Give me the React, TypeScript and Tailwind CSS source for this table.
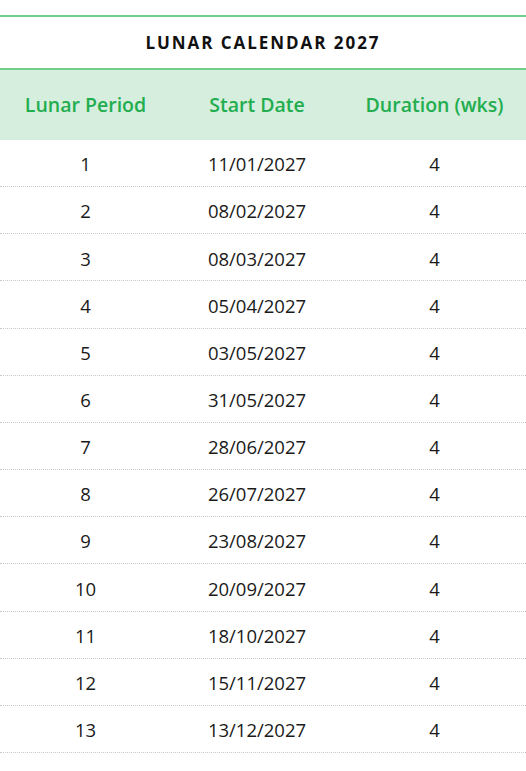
import React from "react";

const rows: [string, string, string][] = [
  ["1", "11/01/2027", "4"],
  ["2", "08/02/2027", "4"],
  ["3", "08/03/2027", "4"],
  ["4", "05/04/2027", "4"],
  ["5", "03/05/2027", "4"],
  ["6", "31/05/2027", "4"],
  ["7", "28/06/2027", "4"],
  ["8", "26/07/2027", "4"],
  ["9", "23/08/2027", "4"],
  ["10", "20/09/2027", "4"],
  ["11", "18/10/2027", "4"],
  ["12", "15/11/2027", "4"],
  ["13", "13/12/2027", "4"],
];

export default function App() {
  return (
    <div className="w-[526px] h-[771px] bg-white pt-[15px] font-['Open_Sans',sans-serif] overflow-hidden">
      <div className="border-t-2 border-[#6fcf8d] h-[53px] flex items-center justify-center">
        <h1 className="text-[17px] font-bold tracking-[0.115em] text-[#111]">LUNAR CALENDAR 2027</h1>
      </div>
      <div className="grid grid-cols-[171px_172px_1fr] border-t-2 border-[#6fcf8d] bg-[#d5eedd] h-[72px] items-center text-[19.5px] font-semibold text-[#22ad4f]">
        <div className="text-center">Lunar Period</div>
        <div className="text-center">Start Date</div>
        <div className="text-center">Duration (wks)</div>
      </div>
      {rows.map((r) => (
        <div
          key={r[0]}
          className="grid grid-cols-[171px_172px_1fr] h-[47.17px] pt-[2px] items-center border-b border-dotted border-[#c8c8c8] text-[18.5px] text-[#1a1a1a]"
        >
          <div className="text-center">{r[0]}</div>
          <div className="text-center">{r[1]}</div>
          <div className="text-center">{r[2]}</div>
        </div>
      ))}
    </div>
  );
}
